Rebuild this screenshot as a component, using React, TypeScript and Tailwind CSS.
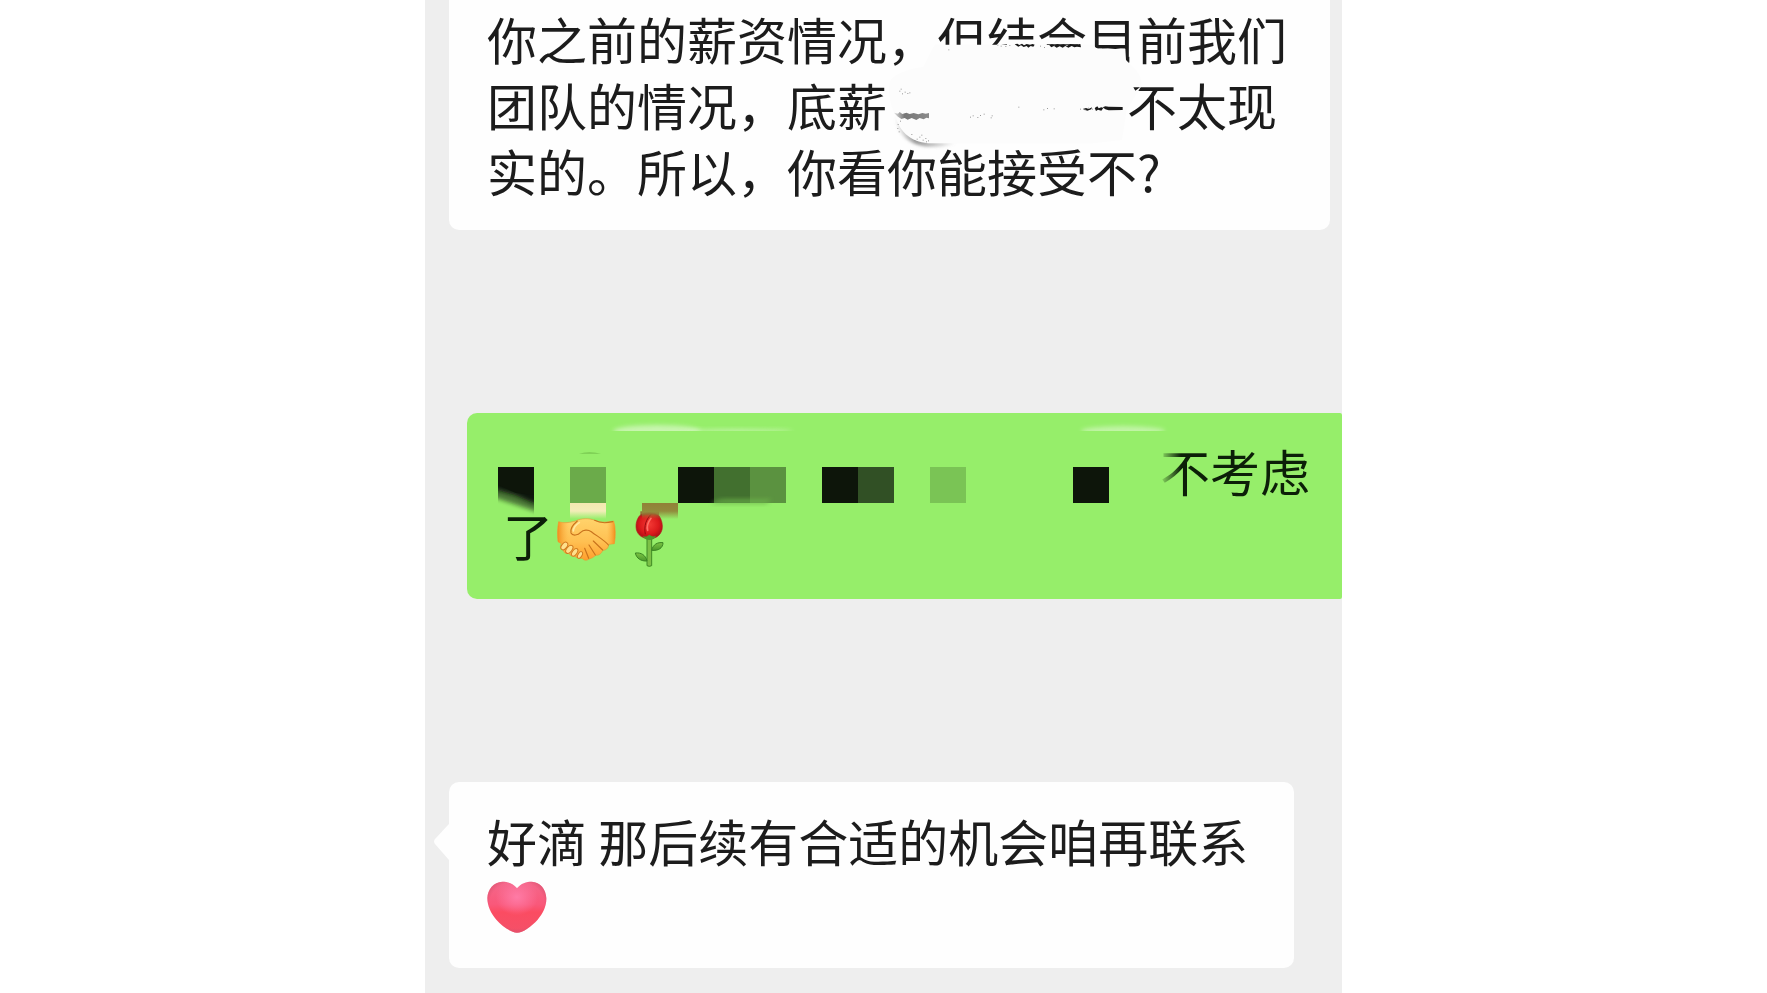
import { ReactNode } from 'react';
import clsx from 'clsx';

type BubbleProps = {
  className?: string;
  children: ReactNode;
};

const MOSAIC = [
  { x: 103, color: '#6bab4a' },
  { x: 211, color: '#0d150a' },
  { x: 247, color: '#42702f' },
  { x: 283, color: '#5b9240' },
  { x: 355, color: '#0d150a' },
  { x: 391, color: '#315025' },
  { x: 463, color: '#7ac455' },
  { x: 606, color: '#0d150a' },
];

const SPECKS = [
  [118, 272], [126, 280], [134, 275], [142, 279], [122, 266], [148, 277],
  [330, 350], [338, 346], [352, 351], [360, 345], [371, 341], [392, 352],
  [395, 346], [475, 320], [550, 328], [561, 324], [581, 325], [660, 326],
  [674, 328], [684, 323], [696, 326], [412, 134], [422, 137], [436, 138],
  [448, 135], [540, 137], [552, 141], [120, 362], [113, 372], [112, 384],
  [116, 394], [154, 402], [170, 416], [178, 410], [188, 419], [196, 414],
  [204, 421], [163, 420], [184, 404], [198, 424], [265, 148],
];

function Bubble({ className, children }: BubbleProps) {
  return (
    <div className={clsx('relative text-[50px]', className)}>{children}</div>
  );
}

function Smudge() {
  return (
    <svg
      aria-hidden="true"
      className="pointer-events-none absolute left-[411px] top-0 h-[160px] w-[340px]"
      viewBox="0 0 1020 480"
    >
      <defs>
        <filter id="smudge-soft" x="-10%" y="-10%" width="120%" height="120%">
          <feGaussianBlur stdDeviation="4" />
        </filter>
        <linearGradient id="smudge-shadow" x1="0" x2="1">
          <stop offset="0" stopColor="#777" stopOpacity="0" />
          <stop offset=".35" stopColor="#777" stopOpacity=".75" />
          <stop offset="1" stopColor="#777" stopOpacity="0" />
        </linearGradient>
        <linearGradient id="smudge-bar" x1="0" x2="1">
          <stop offset="0" stopColor="#777" stopOpacity=".2" />
          <stop offset=".3" stopColor="#777" />
          <stop offset="1" stopColor="#777" stopOpacity=".85" />
        </linearGradient>
      </defs>
      <path
        d="M104 350C112 405 150 436 205 440C245 441 275 436 290 428L200 424Z"
        fill="url(#smudge-shadow)"
        filter="url(#smudge-soft)"
      />
      <path
        d="M224 134L700 134C706 144 712 146 722 146L796 146L798 180L812 194C836 214 850 240 842 262L800 330L786 420L700 430H215C160 430 118 400 106 345C92 320 80 270 92 240C110 215 160 205 190 200Z"
        fill="#fcfcfc"
      />
      <path d="M820 262h20l-14 10M798 174l10-4v18z" fill="#1a1a1a" />
      <path
        d="M102 338l12 3 5-5 8 6 12-4 10 4 12-3 14 4 12-4 10 2 10-2v16l-8-2-8 5-12-4-10 6-14-6-12 5-9-5-10 3-12-8z"
        fill="url(#smudge-bar)"
      />
      <path
        d="M728 322l8-3 10 1 42 1v9l-42 1-10-3zM704 324l8-5 4 6 8-3 6 2-6 8-10-3-6 4zM668 327l10-3 8 3 10-5-2 6-12 4z"
        fill="#1a1a1a"
      />
      <path
        d="M464 133l8-2 6 4 8-4 6 5 8-4 10 2 8-2 6 2-4 6-8-2-7 5-5-5-9 3-8-5-8 4zM568 136l8-3 8 3 8-4 9 3 10-2 10 4 10-5 14 2 16-2 2 10-12-2-8 2-8-4-10 5-9-5-8 5-9-4-9 4-8-5-8 4zM722 138l12 3 16-2 14 3 20-3 18 1v5l-20-1-16 3-22-3-18 1z"
        fill="#1a1a1a"
      />
      {SPECKS.map(([x, y]) => (
        <rect key={`${x}-${y}`} x={x} y={y} width="3" height="3" fill="#999" />
      ))}
    </svg>
  );
}

function Mosaic() {
  return (
    <svg
      aria-hidden="true"
      className="pointer-events-none absolute left-0 top-0 h-[186px] w-[875px]"
      viewBox="0 0 875 186"
    >
      <defs>
        <filter id="mosaic-soft" x="-20%" y="-60%" width="140%" height="220%">
          <feGaussianBlur stdDeviation="2" />
        </filter>
        <linearGradient id="mosaic-cream" x1="0" x2="0" y1="0" y2="1">
          <stop offset="0" stopColor="#f3e8b0" />
          <stop offset=".5" stopColor="#f3edb8" />
          <stop offset="1" stopColor="#f3edb8" stopOpacity="0" />
        </linearGradient>
        <linearGradient id="mosaic-brown" x1="0" x2="0" y1="0" y2="1">
          <stop offset="0" stopColor="#918137" />
          <stop offset=".5" stopColor="#918b3c" />
          <stop offset="1" stopColor="#918b3c" stopOpacity="0" />
        </linearGradient>
        <linearGradient id="mosaic-fade" x1="0" x2="1">
          <stop offset="0" stopColor="#96ee6a" />
          <stop offset="1" stopColor="#96ee6a" stopOpacity="0" />
        </linearGradient>
        <clipPath id="mosaic-first">
          <rect x="31" y="54" width="36" height="50" />
        </clipPath>
        <clipPath id="mosaic-top">
          <rect x="0" y="0" width="875" height="18" />
        </clipPath>
      </defs>
      <g clipPath="url(#mosaic-top)" filter="none" fill="#d4f7c0">
        <ellipse
          cx="190"
          cy="18"
          rx="44"
          ry="6"
          opacity=".8"
          filter="url(#mosaic-soft)"
        />
        <ellipse
          cx="270"
          cy="18"
          rx="56"
          ry="2"
          opacity=".7"
          filter="url(#mosaic-soft)"
        />
        <ellipse
          cx="656"
          cy="18"
          rx="42"
          ry="5"
          opacity=".7"
          filter="url(#mosaic-soft)"
        />
      </g>
      <path d="M112 41q10-4 22 0z" fill="#80d257" />
      <g clipPath="url(#mosaic-first)">
        <path
          d="M20 70L80 84V102L20 82Z"
          fill="#0d150a"
          opacity=".55"
          filter="url(#mosaic-soft)"
        />
        <path
          d="M20 44h60v46l-14 0-18-8-18-5-10-4z"
          fill="#0d150a"
          filter="url(#mosaic-soft)"
        />
        <path d="M31 54h36v28l-18-2-18-8z" fill="#0d150a" />
      </g>
      {MOSAIC.map(({ x, color }) => (
        <rect key={x} x={x} y="54" width="36" height="36" fill={color} />
      ))}
      <path
        d="M244 91q6-5 16-5h45l-6 5z"
        fill="#6db44b"
        filter="url(#mosaic-soft)"
        opacity=".7"
      />
      <rect x="103" y="90" width="36" height="16" fill="url(#mosaic-cream)" />
      <rect x="175" y="90" width="36" height="16" fill="url(#mosaic-brown)" />
      <rect x="692" y="34" width="22" height="60" fill="url(#mosaic-fade)" />
    </svg>
  );
}

function Handshake() {
  return (
    <svg
      role="img"
      aria-label="握手"
      className="h-11 w-[59px]"
      viewBox="289 350 177 132"
    >
      <defs>
        <linearGradient id="hand-skin" x1="0" x2="0" y1="0" y2="1">
          <stop offset="0" stopColor="#ffd36b" />
          <stop offset=".55" stopColor="#ffc052" />
          <stop offset="1" stopColor="#ff9f2c" />
        </linearGradient>
        <linearGradient id="hand-cuff" x1="0" x2="1">
          <stop offset="0" stopColor="#f08d1c" />
          <stop offset=".2" stopColor="#fdb445" stopOpacity="0" />
          <stop offset=".85" stopColor="#fdb445" stopOpacity="0" />
          <stop offset="1" stopColor="#f08d1c" />
        </linearGradient>
      </defs>
      <path
        d="M294 364C310 370 328 366 345 362C360 353 388 353 402 360C420 368 440 366 459 362C465 382 465 408 461 430L444 432C443 446 434 450 426 450C423 460 414 466 404 465C398 474 388 474 384 477C376 482 368 479 364 474C354 475 346 472 343 468C333 469 326 464 325 459C314 461 308 455 309 449C298 447 297 438 302 430L292 424C290 404 290 384 294 364Z"
        fill="url(#hand-skin)"
        stroke="#e59a38"
        strokeWidth="2"
      />
      <path
        d="M294 364C310 370 328 366 345 362C360 353 388 353 402 360C420 368 440 366 459 362C465 382 465 408 461 430L444 432L302 430L292 424C290 404 290 384 294 364Z"
        fill="url(#hand-cuff)"
      />
      <g fill="#ffe08c" stroke="#d07a1f" strokeWidth="3">
        <ellipse cx="311" cy="437" rx="8" ry="13" transform="rotate(38 311 437)" />
        <ellipse cx="326" cy="447" rx="8" ry="14" transform="rotate(38 326 447)" />
        <ellipse cx="342" cy="456" rx="7" ry="13" transform="rotate(35 342 456)" />
        <ellipse cx="358" cy="464" rx="6" ry="11" transform="rotate(30 358 464)" />
      </g>
      <g
        fill="none"
        stroke="#c9731d"
        strokeWidth="3.5"
        strokeLinecap="round"
        strokeLinejoin="round"
      >
        <path d="M350 362C338 372 328 386 331 398C336 408 352 405 360 396C368 388 382 387 392 394C410 408 432 420 443 434" />
        <path d="M398 422L426 449M385 434L404 464M372 444L384 474" />
        <path d="M402 360C420 370 440 368 456 364" />
      </g>
      <path
        d="M356 367C345 374 338 384 338 392"
        fill="none"
        stroke="#ffe9a3"
        strokeWidth="5"
        strokeLinecap="round"
      />
    </svg>
  );
}

function Rose() {
  return (
    <svg
      role="img"
      aria-label="玫瑰"
      className="h-14 w-[30px]"
      viewBox="519 336 90 168"
    >
      <defs>
        <radialGradient id="rose-bud" cx=".5" cy=".45" r=".6">
          <stop offset="0" stopColor="#f33a35" />
          <stop offset=".6" stopColor="#dc1a1c" />
          <stop offset="1" stopColor="#a30d14" />
        </radialGradient>
        <linearGradient id="rose-leaf" x1="0" x2="0" y1="0" y2="1">
          <stop offset="0" stopColor="#7cc443" />
          <stop offset="1" stopColor="#4b9a2c" />
        </linearGradient>
      </defs>
      <path
        d="M558 412h14v88q-7 4-14 0z"
        fill="#7cc046"
        stroke="#3f8a24"
        strokeWidth="3"
      />
      <path
        d="M572 454C576 436 590 429 606 431C606 447 592 456 572 454Z"
        fill="url(#rose-leaf)"
        stroke="#3a8422"
        strokeWidth="3"
      />
      <path
        d="M558 486C554 468 540 460 523 462C526 478 540 487 558 486Z"
        fill="url(#rose-leaf)"
        stroke="#3a8422"
        strokeWidth="3"
      />
      <path
        d="M536 350C548 338 580 338 594 350C602 362 606 378 603 392C598 410 584 419 565 419C544 419 530 408 526 391C523 374 528 360 536 350Z"
        fill="url(#rose-bud)"
        stroke="#b5161b"
        strokeWidth="2"
      />
      <path
        d="M570 346C556 360 548 380 553 406"
        fill="none"
        stroke="#96090f"
        strokeWidth="3"
      />
      <path
        d="M570 358C561 370 557 384 560 394"
        fill="none"
        stroke="#ff7068"
        strokeWidth="5"
        strokeLinecap="round"
      />
      <path d="M538 337h56v11q-28-6-56 4z" fill="#8f4427" opacity=".7" />
      <path
        d="M545 411q10 3 14 0l6-4 6 4q6 3 14-1q-6 14-20 13q-14 0-20-12z"
        fill="#4c9a2c"
      />
    </svg>
  );
}

function Heart() {
  return (
    <svg
      role="img"
      aria-label="爱心"
      className="h-[52px] w-[60px]"
      viewBox="200 335 180 156"
    >
      <defs>
        <linearGradient id="heart-body" x1="0" x2="0" y1="0" y2="1">
          <stop offset="0" stopColor="#f4688b" />
          <stop offset=".45" stopColor="#f9587a" />
          <stop offset=".6" stopColor="#fb4c62" />
          <stop offset="1" stopColor="#f45068" />
        </linearGradient>
        <radialGradient id="heart-glow" cx=".5" cy=".3" r=".36">
          <stop offset="0" stopColor="#ff7ba6" />
          <stop offset="1" stopColor="#ff7ba6" stopOpacity="0" />
        </radialGradient>
        <radialGradient id="heart-edge" cx=".5" cy=".45" r=".58">
          <stop offset=".8" stopColor="#d8506c" stopOpacity="0" />
          <stop offset="1" stopColor="#d8506c" stopOpacity=".8" />
        </radialGradient>
      </defs>
      {['url(#heart-body)', 'url(#heart-glow)', 'url(#heart-edge)'].map((fill) => (
        <path
          key={fill}
          d="M290 357C278 342 262 337 246 337C220 338 202 360 201 386C201 410 212 432 228 451C246 471 272 490 290 490C308 490 334 471 352 451C368 432 379 410 378 386C377 360 360 338 334 337C318 337 302 342 290 357Z"
          fill={fill}
        />
      ))}
    </svg>
  );
}

export default function App() {
  return (
    <div className="min-h-screen bg-white font-['Noto_Sans_CJK_SC',sans-serif]">
      <main
        lang="zh-CN"
        className="mx-auto flex min-h-screen w-full max-w-[917px] flex-col items-start gap-[183px] overflow-hidden bg-[#eeeeee] pl-6"
      >
        <Bubble className="mr-3 rounded-b-[10px] bg-[#fefefe] pb-[27px] pl-[38px] pr-[34px] pt-[5px] leading-[66px] text-[#1c1c1c]">
          <p>
            你之前的薪资情况，但结合目前我们团队的情况，底薪
            <span className="inline-block w-60" />
            不太现实的。所以，你看你能接受不?
          </p>
          <Smudge />
        </Bubble>

        <Bubble className="ml-[18px] self-stretch rounded-l-[10px] rounded-r-[2px] bg-[#96ee6a] pb-[23px] pl-9 pr-8 pt-[25px] leading-[64px] text-[#0c1f08]">
          <p className="text-right">不考虑</p>
          <p className="flex items-start">
            了
            <span className="flex h-[74px] items-center gap-[18px] pl-1">
              <Handshake />
              <Rose />
            </span>
          </p>
          <Mosaic />
        </Bubble>

        <Bubble className="rounded-[10px] bg-[#fefefe] pb-[27px] pl-[38px] pr-[46px] pt-[25px] leading-[66px] text-[#1c1c1c]">
          <svg
            aria-hidden="true"
            className="absolute -left-4 top-[42px] h-9 w-4"
            viewBox="0 0 16 36"
          >
            <path d="M16 0L2 15Q0 17.500 2 20L16 36Z" fill="#fefefe" />
          </svg>
          <p>好滴 那后续有合适的机会咱再联系</p>
          <p className="flex h-[68px] items-center">
            <Heart />
          </p>
        </Bubble>
      </main>
    </div>
  );
}
